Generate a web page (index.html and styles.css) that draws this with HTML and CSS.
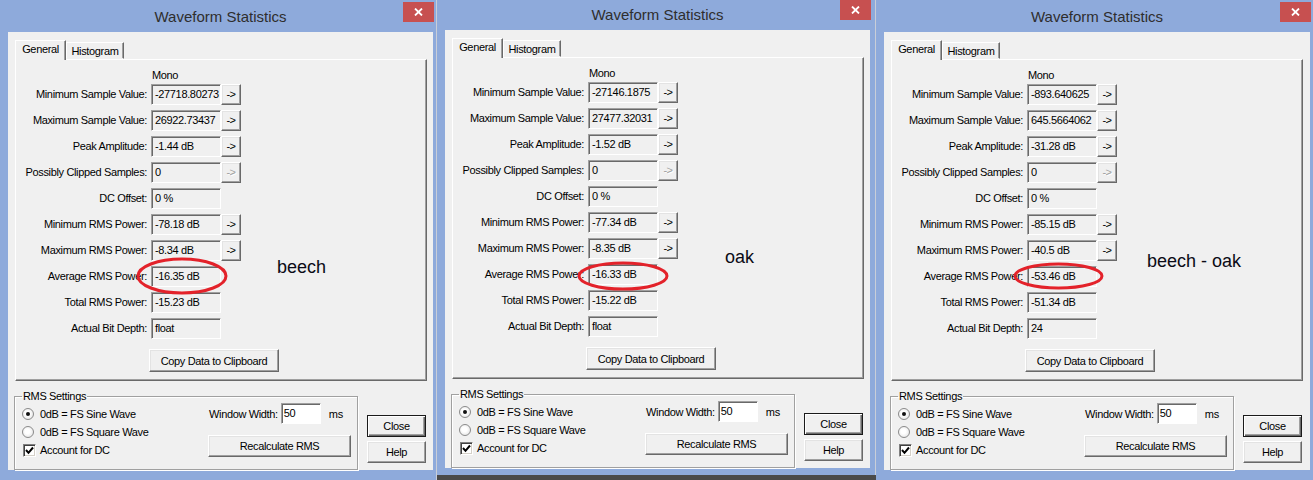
FILE: index.html
```html
<!DOCTYPE html>
<html>
<head>
<meta charset="utf-8">
<title>Waveform Statistics</title>
<link rel="stylesheet" href="styles.css">
</head>
<body>

<div class="dlg d1">
  <div class="titlebar">
    <span class="title">Waveform Statistics</span>
    <span class="xbtn"><svg width="9" height="8" viewBox="0 0 9 8"><path d="M1 0.5 L8 7.5 M8 0.5 L1 7.5" stroke="#fff" stroke-width="1.8"/></svg></span>
  </div>
  <div class="client">
    <div class="tabs"><span class="tab active">General</span><span class="tab hist">Histogram</span></div>
    <div class="panel">
      <div class="mono">Mono</div>
      <div class="stats">
        <span class="lbl">Minimum Sample Value:</span><span class="fld">-27718.80273</span><span class="arr">-&gt;</span>
        <span class="lbl">Maximum Sample Value:</span><span class="fld">26922.73437</span><span class="arr">-&gt;</span>
        <span class="lbl">Peak Amplitude:</span><span class="fld">-1.44 dB</span><span class="arr">-&gt;</span>
        <span class="lbl">Possibly Clipped Samples:</span><span class="fld">0</span><span class="arr off">-&gt;</span>
        <span class="lbl">DC Offset:</span><span class="fld">0 %</span>
        <span class="lbl">Minimum RMS Power:</span><span class="fld">-78.18 dB</span><span class="arr">-&gt;</span>
        <span class="lbl">Maximum RMS Power:</span><span class="fld">-8.34 dB</span><span class="arr">-&gt;</span>
        <span class="lbl">Average RMS Power:</span><span class="fld">-16.35 dB</span>
        <span class="lbl">Total RMS Power:</span><span class="fld">-15.23 dB</span>
        <span class="lbl">Actual Bit Depth:</span><span class="fld">float</span>
      </div>
      <span class="btn copy">Copy Data to Clipboard</span>
    </div>
    <div class="bottom">
      <fieldset class="group">
        <legend>RMS Settings</legend>
        <div class="opts">
          <div class="opt"><span class="radio on"></span><span class="otext">0dB = FS Sine Wave</span></div>
          <div class="opt"><span class="radio"></span><span class="otext">0dB = FS Square Wave</span></div>
          <div class="opt"><span class="check"><svg width="9" height="9" viewBox="0 0 9 9"><path d="M1 4 L3.5 6.8 L8 1.5" stroke="#000" stroke-width="2" fill="none"/></svg></span><span class="ctext">Account for DC</span></div>
        </div>
        <div class="rcol">
          <div class="ww"><span>Window Width:</span><span class="inp">50</span><span class="ms">ms</span></div>
          <span class="btn recalc">Recalculate RMS</span>
        </div>
      </fieldset>
      <div class="side">
        <span class="btn def">Close</span>
        <span class="btn help">Help</span>
      </div>
    </div>
  </div>
  <span class="note n1">beech</span>
  <svg class="ring r1" width="92" height="38" viewBox="0 0 92 38"><ellipse cx="46" cy="19" rx="44" ry="17" fill="none" stroke="#e3222a" stroke-width="3"/></svg>
</div>

<div class="dlg d2">
  <div class="titlebar">
    <span class="title">Waveform Statistics</span>
    <span class="xbtn"><svg width="9" height="8" viewBox="0 0 9 8"><path d="M1 0.5 L8 7.5 M8 0.5 L1 7.5" stroke="#fff" stroke-width="1.8"/></svg></span>
  </div>
  <div class="client">
    <div class="tabs"><span class="tab active">General</span><span class="tab hist">Histogram</span></div>
    <div class="panel">
      <div class="mono">Mono</div>
      <div class="stats">
        <span class="lbl">Minimum Sample Value:</span><span class="fld">-27146.1875</span><span class="arr">-&gt;</span>
        <span class="lbl">Maximum Sample Value:</span><span class="fld">27477.32031</span><span class="arr">-&gt;</span>
        <span class="lbl">Peak Amplitude:</span><span class="fld">-1.52 dB</span><span class="arr">-&gt;</span>
        <span class="lbl">Possibly Clipped Samples:</span><span class="fld">0</span><span class="arr off">-&gt;</span>
        <span class="lbl">DC Offset:</span><span class="fld">0 %</span>
        <span class="lbl">Minimum RMS Power:</span><span class="fld">-77.34 dB</span><span class="arr">-&gt;</span>
        <span class="lbl">Maximum RMS Power:</span><span class="fld">-8.35 dB</span><span class="arr">-&gt;</span>
        <span class="lbl">Average RMS Power:</span><span class="fld">-16.33 dB</span>
        <span class="lbl">Total RMS Power:</span><span class="fld">-15.22 dB</span>
        <span class="lbl">Actual Bit Depth:</span><span class="fld">float</span>
      </div>
      <span class="btn copy">Copy Data to Clipboard</span>
    </div>
    <div class="bottom">
      <fieldset class="group">
        <legend>RMS Settings</legend>
        <div class="opts">
          <div class="opt"><span class="radio on"></span><span class="otext">0dB = FS Sine Wave</span></div>
          <div class="opt"><span class="radio"></span><span class="otext">0dB = FS Square Wave</span></div>
          <div class="opt"><span class="check"><svg width="9" height="9" viewBox="0 0 9 9"><path d="M1 4 L3.5 6.8 L8 1.5" stroke="#000" stroke-width="2" fill="none"/></svg></span><span class="ctext">Account for DC</span></div>
        </div>
        <div class="rcol">
          <div class="ww"><span>Window Width:</span><span class="inp">50</span><span class="ms">ms</span></div>
          <span class="btn recalc">Recalculate RMS</span>
        </div>
      </fieldset>
      <div class="side">
        <span class="btn def">Close</span>
        <span class="btn help">Help</span>
      </div>
    </div>
  </div>
  <span class="note n2">oak</span>
  <svg class="ring r2" width="92" height="30" viewBox="0 0 92 30"><ellipse cx="46" cy="15" rx="44" ry="13" fill="none" stroke="#e3222a" stroke-width="3"/></svg>
</div>

<div class="dlg d3">
  <div class="titlebar">
    <span class="title">Waveform Statistics</span>
    <span class="xbtn"><svg width="9" height="8" viewBox="0 0 9 8"><path d="M1 0.5 L8 7.5 M8 0.5 L1 7.5" stroke="#fff" stroke-width="1.8"/></svg></span>
  </div>
  <div class="client">
    <div class="tabs"><span class="tab active">General</span><span class="tab hist">Histogram</span></div>
    <div class="panel">
      <div class="mono">Mono</div>
      <div class="stats">
        <span class="lbl">Minimum Sample Value:</span><span class="fld">-893.640625</span><span class="arr">-&gt;</span>
        <span class="lbl">Maximum Sample Value:</span><span class="fld">645.5664062</span><span class="arr">-&gt;</span>
        <span class="lbl">Peak Amplitude:</span><span class="fld">-31.28 dB</span><span class="arr">-&gt;</span>
        <span class="lbl">Possibly Clipped Samples:</span><span class="fld">0</span><span class="arr off">-&gt;</span>
        <span class="lbl">DC Offset:</span><span class="fld">0 %</span>
        <span class="lbl">Minimum RMS Power:</span><span class="fld">-85.15 dB</span><span class="arr">-&gt;</span>
        <span class="lbl">Maximum RMS Power:</span><span class="fld">-40.5 dB</span><span class="arr">-&gt;</span>
        <span class="lbl">Average RMS Power:</span><span class="fld">-53.46 dB</span>
        <span class="lbl">Total RMS Power:</span><span class="fld">-51.34 dB</span>
        <span class="lbl">Actual Bit Depth:</span><span class="fld">24</span>
      </div>
      <span class="btn copy">Copy Data to Clipboard</span>
    </div>
    <div class="bottom">
      <fieldset class="group">
        <legend>RMS Settings</legend>
        <div class="opts">
          <div class="opt"><span class="radio on"></span><span class="otext">0dB = FS Sine Wave</span></div>
          <div class="opt"><span class="radio"></span><span class="otext">0dB = FS Square Wave</span></div>
          <div class="opt"><span class="check"><svg width="9" height="9" viewBox="0 0 9 9"><path d="M1 4 L3.5 6.8 L8 1.5" stroke="#000" stroke-width="2" fill="none"/></svg></span><span class="ctext">Account for DC</span></div>
        </div>
        <div class="rcol">
          <div class="ww"><span>Window Width:</span><span class="inp">50</span><span class="ms">ms</span></div>
          <span class="btn recalc">Recalculate RMS</span>
        </div>
      </fieldset>
      <div class="side">
        <span class="btn def">Close</span>
        <span class="btn help">Help</span>
      </div>
    </div>
  </div>
  <span class="note n3">beech - oak</span>
  <svg class="ring r3" width="91" height="28" viewBox="0 0 91 28"><ellipse cx="45.5" cy="14" rx="43.5" ry="12" fill="none" stroke="#e3222a" stroke-width="3"/></svg>
</div>

</body>
</html>
```

FILE: styles.css
```css
* { box-sizing: border-box; margin: 0; padding: 0; }

html, body {
  width: 1313px;
  height: 480px;
  overflow: hidden;
}

body {
  background: #4a4a4a;
  display: flex;
  align-items: flex-start;
  font-family: "Liberation Sans", Arial, sans-serif;
  font-size: 11px;
  letter-spacing: -0.35px;
  color: #000;
}

/* ---------- window frame ---------- */
.dlg {
  position: relative;
  flex: none;
  width: 437px;
  height: 482px;
  background: #8eaadb;
  padding: 0 3px 0 8px;
  border-right: 1px solid #c9ced8;
  display: flex;
  flex-direction: column;
}
.d2 {
  width: 439px;
  height: 477px;
  margin-top: -2px;
  padding-right: 5px;
}
.d3 { border-right: 0; }

.titlebar {
  height: 32px;
  display: grid;
}
.title {
  grid-area: 1 / 1;
  justify-self: center;
  align-self: center;
  font-family: "Liberation Sans", Arial, sans-serif;
  font-size: 15px;
  letter-spacing: 0;
  color: #2e2e2e;
}
.xbtn {
  grid-area: 1 / 1;
  justify-self: end;
  align-self: start;
  margin: 2px -1px 0 0;
  width: 31px;
  height: 20px;
  background: #c75050;
  display: flex;
  align-items: center;
  justify-content: center;
}

.client {
  height: 438px;
  background: #f0f0f0;
  padding: 8px 6px 0 7px;
  display: flex;
  flex-direction: column;
}

/* ---------- tabs ---------- */
.tabs {
  height: 19px;
  display: flex;
  align-items: flex-end;
}
.tab {
  height: 17px;
  line-height: 14px;
  text-align: center;
  border: 1px solid;
  border-color: #fff #696969 transparent #fff;
  box-shadow: inset -1px 0 #a0a0a0;
  background: #f0f0f0;
}
.tab.active {
  position: relative;
  z-index: 1;
  width: 51px;
  height: 20px;
  margin-bottom: -1px;
  padding-top: 1px;
  border-bottom: 0;
}
.tab.hist {
  width: 58px;
  padding-top: 1px;
}

.panel {
  width: 412px;
  height: 323px;
  border: 1px solid;
  border-color: #fff #696969 #696969 #fff;
  box-shadow: inset -1px -1px #a0a0a0;
  padding-top: 8px;
  display: flex;
  flex-direction: column;
}
.mono {
  height: 14px;
  line-height: 14px;
  margin-bottom: 2px;
  padding-left: 136px;
}
.stats {
  display: grid;
  grid-template-columns: 135px 70px 20px;
  grid-auto-rows: 21px;
  row-gap: 5px;
}
.lbl {
  grid-column: 1;
  text-align: right;
  padding-right: 4px;
  line-height: 21px;
  white-space: nowrap;
}
.fld {
  grid-column: 2;
  border: 1px solid;
  border-color: #a0a0a0 #fff #fff #a0a0a0;
  box-shadow: inset 1px 1px #696969;
  padding-left: 3px;
  line-height: 18px;
  white-space: nowrap;
  overflow: hidden;
  background: #f0f0f0;
}
.arr {
  grid-column: 3;
  border: 1px solid;
  border-color: #fff #696969 #696969 #fff;
  box-shadow: inset -1px -1px #a0a0a0, inset 1px 1px #e3e3e3;
  text-align: center;
  line-height: 18px;
  letter-spacing: -0.5px;
}
.arr.off {
  color: #a0a0a0;
  text-shadow: 1px 1px #fff;
}

/* ---------- buttons ---------- */
.btn {
  display: flex;
  align-items: center;
  justify-content: center;
  border: 1px solid;
  border-color: #fff #696969 #696969 #fff;
  box-shadow: inset -1px -1px #a0a0a0, inset 1px 1px #e3e3e3;
  background: #f0f0f0;
  white-space: nowrap;
}
.copy {
  width: 130px;
  height: 23px;
  margin: 10px 0 0 133px;
}
.btn.def {
  border: 1px solid #1a1a1a;
  box-shadow: inset 1px 1px #fff, inset -1px -1px #696969, inset -2px -2px #a0a0a0;
}

/* ---------- bottom area ---------- */
.bottom {
  display: flex;
  padding-top: 8px;
}
.group {
  width: 344px;
  margin-left: -1px;
  border: 1px solid #a0a0a0;
  box-shadow: 1px 1px 0 #fff, inset 1px 1px #fff;
  padding: 2px 6px 10px 7px;
  display: grid;
  grid-template-columns: 186px 143px;
}
.group legend {
  line-height: 14px;
  padding: 0 1px;
  margin-top: 1px;
}
.opts { display: flex; flex-direction: column; }
.opt {
  height: 18px;
  display: flex;
  align-items: center;
}
.radio {
  width: 12px;
  height: 12px;
  border-radius: 50%;
  border: 1px solid #8a8a8a;
  background: radial-gradient(circle at 45% 45%, #ffffff 30%, #dcdcdc 100%);
  display: flex;
  align-items: center;
  justify-content: center;
}
.radio.on::after {
  content: "";
  width: 4px;
  height: 4px;
  border-radius: 50%;
  background: #111;
}
.otext { margin-left: 6px; }
.check {
  width: 13px;
  height: 13px;
  margin-left: 1px;
  border: 1px solid;
  border-color: #808080 #fff #fff #808080;
  box-shadow: inset 1px 1px #404040, inset -1px -1px #d4d0c8;
  background: #fff;
  display: flex;
  align-items: center;
  justify-content: center;
}
.ctext { margin-left: 4px; }

.rcol {
  display: flex;
  flex-direction: column;
  margin-top: -2px;
}
.ww {
  height: 21px;
  display: flex;
  align-items: center;
  padding-left: 1px;
}
.inp {
  width: 40px;
  height: 21px;
  margin-left: 3px;
  border: 1px solid;
  border-color: #a0a0a0 #fff #fff #a0a0a0;
  box-shadow: inset 1px 1px #696969;
  background: #fff;
  padding-left: 2px;
  line-height: 18px;
}
.ms { margin-left: 8px; }
.recalc {
  width: 143px;
  height: 22px;
  margin-top: 11px;
}

.side {
  margin: 26px 0 0 9px;
  display: flex;
  flex-direction: column;
}
.side .btn {
  width: 59px;
  height: 22px;
}
.side .help { margin-top: 4px; }

/* ---------- annotations (drawn over the screenshot) ---------- */
.note {
  position: absolute;
  font-family: "Liberation Sans", Arial, sans-serif;
  font-size: 18px;
  line-height: 20px;
  letter-spacing: 0;
  color: #0b0b16;
  white-space: nowrap;
}
.n1 { left: 277px; top: 257px; }
.n2 { left: 288px; top: 249px; }
.n3 { left: 271px; top: 251px; }

.ring { position: absolute; }
.r1 { left: 136px; top: 257px; }
.r2 { left: 140px; top: 263px; }
.r3 { left: 137px; top: 262px; }
```
